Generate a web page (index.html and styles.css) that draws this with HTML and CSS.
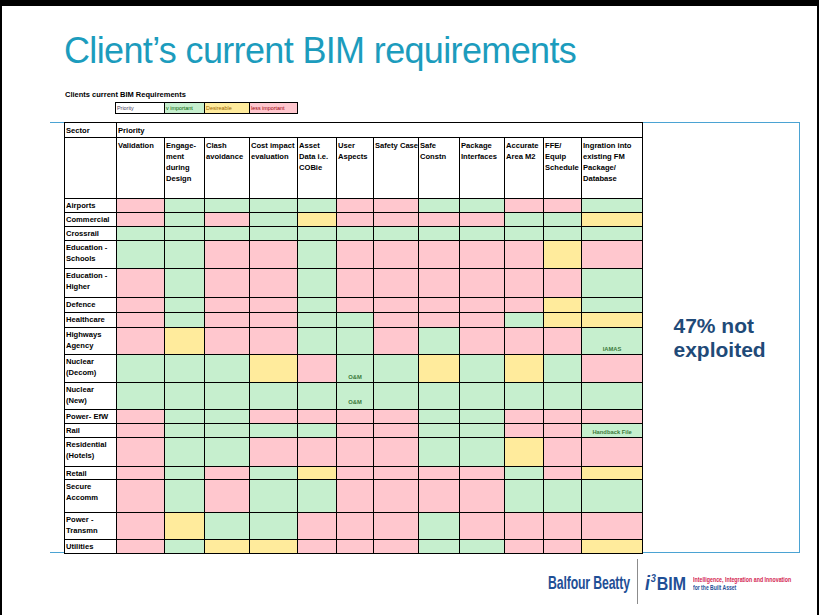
FILE: index.html
```html
<!DOCTYPE html>
<html lang="en">
<head>
<meta charset="utf-8">
<title>Client’s current BIM requirements</title>
<link rel="stylesheet" href="styles.css">
</head>
<body>
<div class="slide">
  <h1 class="title">Client’s current BIM requirements</h1>
  <div class="caption">Clients current BIM Requirements</div>
  <div class="legend">
    <div class="lg lg-w">Priority</div>
    <div class="lg lg-g">v important</div>
    <div class="lg lg-y">Desireable</div>
    <div class="lg lg-p">less important</div>
  </div>
  <div class="panel">
    <table class="grid">
      <colgroup>
        <col class="c52"><col class="c48"><col class="c40"><col class="c45"><col class="c48"><col class="c39"><col class="c37"><col class="c45"><col class="c41"><col class="c45"><col class="c39"><col class="c38"><col class="c61">
      </colgroup>
      <tr class="h15"><td class="hd">Sector</td><td class="hd" colspan="12">Priority</td></tr>
      <tr class="h61">
        <td></td>
        <td class="hd">Validation</td>
        <td class="hd">Engage-<br>ment<br>during<br>Design</td>
        <td class="hd">Clash<br>avoidance</td>
        <td class="hd">Cost impact<br>evaluation</td>
        <td class="hd">Asset<br>Data i.e.<br>COBie</td>
        <td class="hd">User<br>Aspects</td>
        <td class="hd">Safety Case</td>
        <td class="hd">Safe<br>Constn</td>
        <td class="hd">Package<br>Interfaces</td>
        <td class="hd">Accurate<br>Area M2</td>
        <td class="hd">FFE/<br>Equip<br>Schedule</td>
        <td class="hd">Ingration into<br>existing FM<br>Package/<br>Database</td>
      </tr>
      <tr class="h14"><td class="sec">Airports</td><td class="p"></td><td class="g"></td><td class="g"></td><td class="g"></td><td class="g"></td><td class="p"></td><td class="p"></td><td class="g"></td><td class="g"></td><td class="p"></td><td class="p"></td><td class="g"></td></tr>
      <tr class="h14"><td class="sec">Commercial</td><td class="p"></td><td class="g"></td><td class="p"></td><td class="g"></td><td class="y"></td><td class="p"></td><td class="p"></td><td class="p"></td><td class="p"></td><td class="g"></td><td class="g"></td><td class="y"></td></tr>
      <tr class="h14"><td class="sec">Crossrail</td><td class="g"></td><td class="g"></td><td class="g"></td><td class="g"></td><td class="g"></td><td class="g"></td><td class="g"></td><td class="g"></td><td class="g"></td><td class="g"></td><td class="g"></td><td class="g"></td></tr>
      <tr class="h28"><td class="sec">Education -<br>Schools</td><td class="g"></td><td class="g"></td><td class="p"></td><td class="p"></td><td class="g"></td><td class="p"></td><td class="p"></td><td class="p"></td><td class="p"></td><td class="p"></td><td class="y"></td><td class="p"></td></tr>
      <tr class="h29"><td class="sec">Education -<br>Higher</td><td class="p"></td><td class="g"></td><td class="p"></td><td class="p"></td><td class="g"></td><td class="p"></td><td class="p"></td><td class="p"></td><td class="p"></td><td class="p"></td><td class="p"></td><td class="g"></td></tr>
      <tr class="h15"><td class="sec">Defence</td><td class="p"></td><td class="g"></td><td class="p"></td><td class="p"></td><td class="g"></td><td class="p"></td><td class="p"></td><td class="p"></td><td class="p"></td><td class="p"></td><td class="y"></td><td class="g"></td></tr>
      <tr class="h15"><td class="sec">Healthcare</td><td class="p"></td><td class="g"></td><td class="p"></td><td class="p"></td><td class="g"></td><td class="g"></td><td class="p"></td><td class="p"></td><td class="p"></td><td class="g"></td><td class="y"></td><td class="y"></td></tr>
      <tr class="h27"><td class="sec">Highways<br>Agency</td><td class="p"></td><td class="y"></td><td class="p"></td><td class="p"></td><td class="g"></td><td class="g"></td><td class="p"></td><td class="g"></td><td class="p"></td><td class="p"></td><td class="p"></td><td class="g note">IAMAS</td></tr>
      <tr class="h28"><td class="sec">Nuclear<br>(Decom)</td><td class="g"></td><td class="g"></td><td class="g"></td><td class="y"></td><td class="p"></td><td class="g note">O&amp;M</td><td class="g"></td><td class="y"></td><td class="g"></td><td class="y"></td><td class="g"></td><td class="p"></td></tr>
      <tr class="h27"><td class="sec">Nuclear<br>(New)</td><td class="g"></td><td class="g"></td><td class="g"></td><td class="g"></td><td class="g"></td><td class="g note up">O&amp;M</td><td class="g"></td><td class="g"></td><td class="g"></td><td class="g"></td><td class="g"></td><td class="g"></td></tr>
      <tr class="h14"><td class="sec">Power- EfW</td><td class="p"></td><td class="g"></td><td class="g"></td><td class="p"></td><td class="p"></td><td class="p"></td><td class="p"></td><td class="g"></td><td class="g"></td><td class="p"></td><td class="p"></td><td class="p"></td></tr>
      <tr class="h14"><td class="sec">Rail</td><td class="p"></td><td class="g"></td><td class="g"></td><td class="g"></td><td class="g"></td><td class="p"></td><td class="p"></td><td class="g"></td><td class="g"></td><td class="p"></td><td class="p"></td><td class="g note">Handback File</td></tr>
      <tr class="h29"><td class="sec">Residential<br>(Hotels)</td><td class="p"></td><td class="g"></td><td class="g"></td><td class="p"></td><td class="p"></td><td class="p"></td><td class="p"></td><td class="g"></td><td class="g"></td><td class="y"></td><td class="p"></td><td class="p"></td></tr>
      <tr class="h13"><td class="sec">Retail</td><td class="p"></td><td class="g"></td><td class="p"></td><td class="g"></td><td class="y"></td><td class="p"></td><td class="p"></td><td class="p"></td><td class="p"></td><td class="g"></td><td class="p"></td><td class="y"></td></tr>
      <tr class="h33"><td class="sec">Secure<br>Accomm</td><td class="p"></td><td class="g"></td><td class="p"></td><td class="g"></td><td class="g"></td><td class="p"></td><td class="p"></td><td class="p"></td><td class="p"></td><td class="g"></td><td class="g"></td><td class="g"></td></tr>
      <tr class="h27"><td class="sec">Power -<br>Transmn</td><td class="p"></td><td class="y"></td><td class="g"></td><td class="g"></td><td class="p"></td><td class="p"></td><td class="p"></td><td class="g"></td><td class="p"></td><td class="p"></td><td class="p"></td><td class="p"></td></tr>
      <tr class="h14"><td class="sec">Utilities</td><td class="p"></td><td class="g"></td><td class="y"></td><td class="y"></td><td class="p"></td><td class="p"></td><td class="p"></td><td class="g"></td><td class="g"></td><td class="p"></td><td class="p"></td><td class="y"></td></tr>
    </table>
    <div class="callout">
      <p class="callout-text">47% not<br>exploited</p>
    </div>
  </div>
  <div class="footer">
    <div class="bb-box"><span class="bb">Balfour Beatty</span></div>
    <div class="divider"></div>
    <div class="brand-box"><span class="brand"><span class="ii">i</span><span class="i3">3</span>BIM</span></div>
    <div class="tagline">
      <div class="t-line"><span class="t1">Intelligence, Integration and Innovation</span></div>
      <div class="t-line"><span class="t2">for the Built Asset</span></div>
    </div>
  </div>
</div>
</body>
</html>
```
FILE: styles.css
```css
html, body {
  margin: 0;
  padding: 0;
  background: #000;
}
.slide {
  margin: 6px 2px 0 2px;
  height: 609px;
  background: #fff;
  display: flex;
  flex-direction: column;
  font-family: "Liberation Sans", Arial, sans-serif;
  overflow: hidden;
}
.title {
  margin: 27px 0 0 62px;
  font-size: 36px;
  line-height: 36px;
  height: 36px;
  font-weight: normal;
  letter-spacing: -0.65px;
  color: #1c9cbd;
  white-space: nowrap;
}
.caption {
  margin: 21px 0 0 63px;
  font-size: 7.5px;
  line-height: 9px;
  height: 9px;
  font-weight: bold;
  color: #000;
}
.legend {
  margin: 3px 0 0 113px;
  display: flex;
  height: 10px;
  border-top: 1px solid #000;
  border-bottom: 1px solid #000;
  border-left: 1px solid #000;
  align-self: flex-start;
}
.lg {
  border-right: 1px solid #000;
  font-size: 5.4px;
  line-height: 10px;
  padding-left: 1px;
  box-sizing: border-box;
  white-space: nowrap;
  overflow: hidden;
}
.lg-w { width: 49px; color: #4a3d5c; background: #fff; }
.lg-g { width: 40px; color: #006100; background: #c6efce; }
.lg-y { width: 45px; color: #9c6500; background: #ffeb9c; }
.lg-p { width: 48px; color: #9c0006; background: #ffc7ce; }

.panel {
  margin: 8px 0 0 48px;
  width: 750px;
  height: 431px;
  flex: none;
  box-sizing: border-box;
  border-top: 1px solid #4ba3d3;
  border-right: 1px solid #4ba3d3;
  border-bottom: 1px solid #4ba3d3;
  display: flex;
  padding-left: 14px;
}
.grid {
  margin-top: -1px;
  border-collapse: collapse;
  table-layout: fixed;
  width: 579px;
  height: 431px;
  flex: none;
  font-size: 7.6px;
  font-weight: bold;
  color: #000;
}
.grid td {
  border: 1px solid #000;
  padding: 1px 1px 0 1px;
  vertical-align: top;
  line-height: 11px;
  white-space: nowrap;
  box-sizing: border-box;
}
.c52 { width: 52px; } .c48 { width: 48px; } .c40 { width: 40px; } .c45 { width: 45px; }
.c39 { width: 39px; } .c37 { width: 37px; } .c41 { width: 41px; } .c38 { width: 38px; } .c61 { width: 61px; }
.h13 > td { height: 13px; }
.h14 > td { height: 14px; }
.h15 > td { height: 15px; }
.h27 > td { height: 27px; }
.h28 > td { height: 28px; }
.h29 > td { height: 29px; }
.h33 > td { height: 33px; }
.h61 > td { height: 61px; }
.grid .hd { line-height: 11px; padding-top: 2px; }
.grid .sec { background: #fff; }
.grid .p { background: #ffc7ce; }
.grid .g { background: #c6efce; }
.grid .y { background: #ffeb9c; }
.grid .note {
  vertical-align: bottom;
  text-align: center;
  font-size: 5.8px;
  line-height: 7px;
  font-weight: bold;
  color: #3c7a3c;
  padding-bottom: 1px;
}
.grid .note.up { padding-bottom: 3px; }

.callout {
  flex: 1;
  display: flex;
  align-items: center;
  justify-content: center;
}
.callout-text {
  margin: 0 3px 0 0;
  font-size: 21px;
  line-height: 24px;
  font-weight: bold;
  color: #1f4a78;
}

.footer {
  display: flex;
  align-items: flex-start;
  height: 45px;
  margin-top: 6px;
  padding-left: 546px;
  white-space: nowrap;
}
.bb-box {
  width: 82px;
  margin: 14px 7px 0 0;
  height: 19px;
}
.bb {
  display: inline-block;
  font-size: 19px;
  line-height: 19px;
  font-weight: bold;
  color: #1f4f96;
  letter-spacing: -0.2px;
  transform: scaleX(0.645);
  transform-origin: 0 0;
}
.divider {
  width: 1px;
  height: 45px;
  background: #8c8c8c;
  margin-right: 7px;
}
.brand-box {
  width: 44px;
  margin: 14px 4px 0 0;
  height: 19px;
}
.brand {
  display: inline-block;
  font-size: 19px;
  line-height: 19px;
  font-weight: bold;
  color: #1f4f96;
  transform: scaleX(0.84);
  transform-origin: 0 0;
}
.ii {
  font-style: italic;
  font-size: 21px;
}
.i3 {
  font-style: italic;
  font-size: 11px;
  position: relative;
  top: -8px;
  margin: 0 1px 0 1px;
}
.tagline {
  width: 100px;
  margin-top: 9px;
}
.t-line {
  height: 8px;
}
.t1, .t2 {
  display: inline-block;
  font-size: 8px;
  line-height: 8px;
  font-weight: bold;
  transform: scaleX(0.66);
  transform-origin: 0 0;
}
.t1 { color: #d41f52; }
.t2 { color: #1f4f96; transform: scaleX(0.63); }
```
